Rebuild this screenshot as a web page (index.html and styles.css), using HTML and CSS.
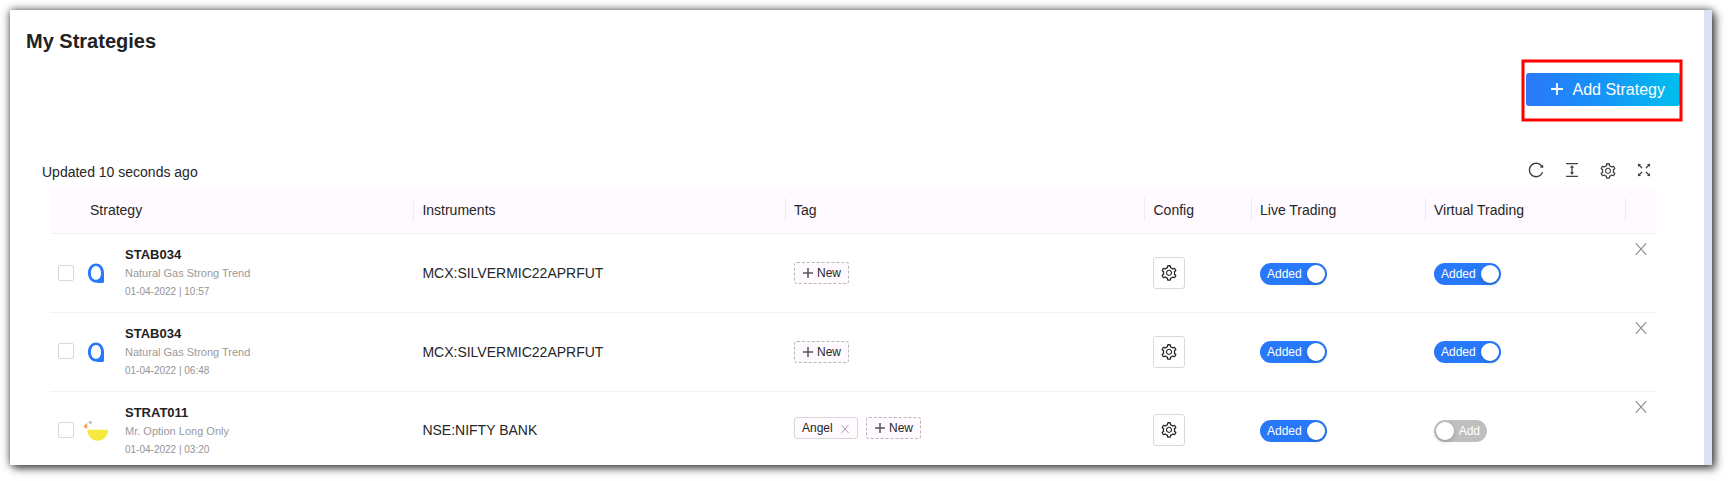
FILE: index.html
```html
<!DOCTYPE html>
<html lang="en">
<head>
<meta charset="utf-8">
<title>My Strategies</title>
<link rel="stylesheet" href="styles.css">
</head>
<body>
<svg class="sprite" aria-hidden="true">
  <symbol id="gear" viewBox="0 0 1024 1024"><path d="M924.8 625.7l-65.5-56c3.1-19 4.7-38.4 4.7-57.8s-1.6-38.8-4.7-57.8l65.5-56a32.03 32.03 0 009.3-35.2l-.9-2.6a443.74 443.74 0 00-79.7-137.9l-1.8-2.1a32.12 32.12 0 00-35.1-9.5l-81.3 28.9c-30-24.6-63.5-44-99.7-57.6l-15.7-85a32.05 32.05 0 00-25.8-25.7l-2.7-.5c-52.1-9.4-106.9-9.4-159 0l-2.7.5a32.05 32.05 0 00-25.8 25.7l-15.8 85.4a351.86 351.86 0 00-99 57.4l-81.9-29.1a32 32 0 00-35.1 9.5l-1.8 2.1a446.02 446.02 0 00-79.7 137.9l-.9 2.6c-4.5 12.5-.8 26.5 9.3 35.2l66.3 56.6c-3.1 18.8-4.6 38-4.6 57.1 0 19.2 1.5 38.4 4.6 57.1L99 625.5a32.03 32.03 0 00-9.3 35.2l.9 2.6c18.1 50.4 44.9 96.9 79.7 137.9l1.8 2.1a32.12 32.12 0 0035.1 9.5l81.9-29.1c29.8 24.5 63.1 43.9 99 57.4l15.8 85.4a32.05 32.05 0 0025.8 25.7l2.7.5a449.4 449.4 0 00159 0l2.7-.5a32.05 32.05 0 0025.8-25.7l15.7-85a350 350 0 0099.7-57.6l81.3 28.9a32 32 0 0035.1-9.5l1.8-2.1c34.8-41.1 61.6-87.5 79.7-137.9l.9-2.6c4.5-12.3.8-26.3-9.3-35zM788.3 465.9c2.5 15.1 3.8 30.6 3.8 46.1s-1.3 31-3.8 46.1l-6.6 40.1 74.7 63.9a370.03 370.03 0 01-42.6 73.6L721 702.8l-31.4 25.8c-23.9 19.6-50.5 35-79.3 45.8l-38.1 14.3-17.9 97a377.5 377.5 0 01-85 0l-17.9-97.2-37.8-14.5c-28.5-10.8-55-26.2-78.7-45.7l-31.4-25.9-93.4 33.2c-17-22.9-31.2-47.6-42.6-73.6l75.5-64.5-6.5-40c-2.4-14.9-3.7-30.3-3.7-45.5 0-15.3 1.2-30.6 3.7-45.5l6.5-40-75.5-64.5c11.3-26.1 25.6-50.7 42.6-73.6l93.4 33.2 31.4-25.9c23.7-19.5 50.2-34.9 78.7-45.7l37.9-14.3 17.9-97.2c28.1-3.2 56.8-3.2 85 0l17.9 97 38.1 14.3c28.7 10.8 55.4 26.2 79.3 45.8l31.4 25.8 92.8-32.9c17 22.9 31.2 47.6 42.6 73.6L781.8 426l6.5 39.9zM512 326c-97.2 0-176 78.8-176 176s78.8 176 176 176 176-78.8 176-176-78.8-176-176-176zm79.2 255.2A111.6 111.6 0 01512 614c-29.9 0-58-11.7-79.2-32.8A111.6 111.6 0 01400 502c0-29.9 11.7-58 32.8-79.2C454 401.6 482.1 390 512 390c29.9 0 58 11.6 79.2 32.8A111.6 111.6 0 01624 502c0 29.9-11.7 58-32.8 79.2z"/></symbol>
  <symbol id="reload" viewBox="0 0 1024 1024"><path d="M909.1 209.3l-56.4 44.1C775.8 155.1 656.2 92 521.9 92 290 92 102.3 279.5 102 511.5 101.7 743.7 289.8 932 521.9 932c181.3 0 335.8-115 394.6-276.1 1.5-4.2-.7-8.9-4.9-10.3l-56.7-19.5a8 8 0 00-10.1 4.8c-1.8 5-3.8 10-5.9 14.9-17.3 41-42.1 77.8-73.7 109.4A344.77 344.77 0 01655.9 829c-42.3 17.9-87.4 27-133.8 27-46.5 0-91.5-9.1-133.8-27A341.5 341.5 0 01279 755.2a342.16 342.16 0 01-73.7-109.4c-17.9-42.4-27-87.4-27-133.9s9.1-91.5 27-133.9c17.3-41 42.1-77.8 73.7-109.4 31.6-31.6 68.4-56.4 109.3-73.8 42.3-17.9 87.4-27 133.8-27 46.5 0 91.5 9.1 133.8 27a341.5 341.5 0 01109.3 73.8c9.9 9.9 19.2 20.4 27.8 31.4l-60.2 47a8 8 0 003 14.1l175.6 43c5 1.2 9.900-2.600 9.900-7.700l.8-180.900c-.1-6.600-7.800-10.300-13-6.200z"/></symbol>
  <symbol id="height" viewBox="0 0 1024 1024"><path d="M840 836H184c-4.400 0-8 3.600-8 8v60c0 4.400 3.600 8 8 8h656c4.400 0 8-3.600 8-8v-60c0-4.400-3.600-8-8-8zm0-724H184c-4.400 0-8 3.600-8 8v60c0 4.400 3.600 8 8 8h656c4.400 0 8-3.600 8-8v-60c0-4.400-3.600-8-8-8zM610.800 378c6 0 9.400-7 5.700-11.700L515.700 238.700a7.140 7.140 0 00-11.300 0L403.600 366.300a7.230 7.230 0 005.700 11.700H476v268h-62.800c-6 0-9.400 7-5.700 11.700l100.800 127.500c2.900 3.700 8.500 3.700 11.300 0l100.800-127.500c3.700-4.700.4-11.700-5.700-11.700H548V378h62.800z"/></symbol>
  <symbol id="full" viewBox="0 0 1024 1024">
    <g id="corner"><path d="M290 236.400l43.900-43.900a8.010 8.010 0 00-4.700-13.600L169 160c-5.100-.6-9.500 3.700-8.900 8.900L179 329.100c.8 6.600 8.900 9.400 13.600 4.700l43.700-43.700L370 423.700c3.100 3.100 8.200 3.100 11.300 0l42.400-42.300c3.100-3.100 3.100-8.200 0-11.300L290 236.400z"/></g>
    <use href="#corner" transform="rotate(90 512 512)"/><use href="#corner" transform="rotate(180 512 512)"/><use href="#corner" transform="rotate(270 512 512)"/>
  </symbol>
  <symbol id="cross" viewBox="0 0 12 12"><path d="M.8.2L11.200 11.800M11.200.2L.8 11.800" fill="none" stroke="currentColor" stroke-width="1.200"/></symbol>
  <symbol id="plus" viewBox="0 0 12 12"><path d="M6 0V12M0 6H12" fill="none" stroke="currentColor" stroke-width="1.800"/></symbol>
  <symbol id="quill" viewBox="0 0 24 24"><path fill-rule="evenodd" d="M12 1.500C7.400 1.500 4 5.500 4 11s3.200 8.900 7.200 9.500c2 .4 4.300.5 6.800.5 1.500 0 2-.5 2-2V11c0-5.500-3.500-9.500-8-9.500zM12 4c3 0 5 3 5 6.900s-2 6.900-5 6.900-5.100-3-5.100-6.900 2.100-6.900 5.100-6.900z"/></symbol>
  <symbol id="duck" viewBox="0 0 26 22"><path fill="#f5ea3d" d="M4.300 9.800h20.800c0 6-4.300 11-10.400 11S4.300 15.800 4.300 9.800z"/><path fill="#f79a54" d="M4.200 3v5.500C2.300 8.300 1 7.300.8 5.900 2.100 5.700 2.500 3.800 4.200 3z"/><circle cx="7.300" cy="2.300" r="1.600" fill="#bdbdc2"/></symbol>
</svg>
<main class="panel">
  <h1 class="title">My Strategies</h1>
  <div class="actions">
    <button class="add"><svg class="add-icon"><use href="#plus"/></svg>Add Strategy</button>
    <svg class="highlight" width="164" height="66"><rect x="3" y="3" width="158" height="59"/></svg>
  </div>
  <div class="toolbar">
    <span>Updated 10 seconds ago</span>
    <div class="tools">
      <svg class="icon"><use href="#reload"/></svg>
      <svg class="icon"><use href="#height"/></svg>
      <svg class="icon tool-gear"><use href="#gear"/></svg>
      <svg class="icon"><use href="#full"/></svg>
    </div>
  </div>
  <section class="table">
    <div class="row head">
      <div class="first">Strategy</div><div>Instruments</div><div>Tag</div><div>Config</div><div>Live Trading</div><div>Virtual Trading</div><div></div>
    </div>
    <div class="row">
      <div class="strategy"><span class="check"></span><svg class="logo quill"><use href="#quill"/></svg>
        <div class="info"><b>STAB034</b><span>Natural Gas Strong Trend</span><small>01-04-2022 | 10:57</small></div></div>
      <div>MCX:SILVERMIC22APRFUT</div>
      <div class="tags"><span class="tag new"><svg><use href="#plus"/></svg>New</span></div>
      <div><span class="config"><svg class="icon"><use href="#gear"/></svg></span></div>
      <div><span class="switch on">Added<i></i></span></div>
      <div><span class="switch on">Added<i></i></span></div>
      <div class="remove"><svg><use href="#cross"/></svg></div>
    </div>
    <div class="row">
      <div class="strategy"><span class="check"></span><svg class="logo quill"><use href="#quill"/></svg>
        <div class="info"><b>STAB034</b><span>Natural Gas Strong Trend</span><small>01-04-2022 | 06:48</small></div></div>
      <div>MCX:SILVERMIC22APRFUT</div>
      <div class="tags"><span class="tag new"><svg><use href="#plus"/></svg>New</span></div>
      <div><span class="config"><svg class="icon"><use href="#gear"/></svg></span></div>
      <div><span class="switch on">Added<i></i></span></div>
      <div><span class="switch on">Added<i></i></span></div>
      <div class="remove"><svg><use href="#cross"/></svg></div>
    </div>
    <div class="row">
      <div class="strategy"><span class="check"></span><svg class="logo duck"><use href="#duck"/></svg>
        <div class="info"><b>STRAT011</b><span>Mr. Option Long Only</span><small>01-04-2022 | 03:20</small></div></div>
      <div>NSE:NIFTY BANK</div>
      <div class="tags multi"><span class="tag angel">Angel<svg class="tag-x"><use href="#cross"/></svg></span><span class="tag new"><svg><use href="#plus"/></svg>New</span></div>
      <div><span class="config"><svg class="icon"><use href="#gear"/></svg></span></div>
      <div><span class="switch on">Added<i></i></span></div>
      <div><span class="switch off"><i></i>Add</span></div>
      <div class="remove"><svg><use href="#cross"/></svg></div>
    </div>
  </section>
</main>
</body>
</html>
```

FILE: styles.css
```css
* { box-sizing: border-box; }
body {
  margin: 0;
  padding: 10px 16px 16px 10px;
  height: 481px;
  overflow: hidden;
  background: #fff;
  color: #262626;
  font: 14px/22px "Liberation Sans", Arial, sans-serif;
}
svg { display: block; flex: none; fill: currentColor; }
.sprite { position: absolute; width: 0; height: 0; }
.panel {
  height: 455px;
  overflow: hidden;
  background: #fff;
  border-right: 8px solid #dce1f6;
  box-shadow: 4px 4px 8px rgba(0, 0, 0, .5), 0 0 8px rgba(0, 0, 0, .68);
}
.title { margin: 0; padding: 16px 16px 0; font-size: 20px; line-height: 30px; height: 63px; font-weight: 700; color: #222; }
.actions { position: relative; display: flex; justify-content: flex-end; padding-right: 24px; height: 78px; }
.add {
  display: flex; align-items: center;
  width: 154px; height: 33px; padding: 0 0 0 25px;
  border: 0; border-radius: 3px;
  background: linear-gradient(90deg, #2a78fa, #1890f8 45%, #00bfee);
  color: #fff; font: 16px/30px "Liberation Sans", Arial, sans-serif;
}
.add-icon { width: 12px; height: 12px; margin: 0 9.500px 1px 0; }
.highlight { position: absolute; right: 20px; top: -15px; }
.highlight rect { fill: none; stroke: #f00; stroke-width: 3; }
.toolbar { display: flex; justify-content: space-between; height: 36px; padding: 10px 51px 0 32px; }
.tools { display: flex; gap: 18px; }
.icon { width: 18px; height: 18px; }
.tools .icon { color: #404040; }
.tools .tool-gear { margin-top: 1px; }
.table { margin: 0 48px 0 40px; width: 1606px; }
.row {
  display: grid;
  grid-template-columns: 364.400px 371.600px 359.500px 106.500px 174px 200px 30px;
  align-items: center;
  height: 78.600px;
  border-bottom: 1px solid #f3f1f3;
}
.row > div { padding-left: 8px; min-width: 0; }
.head { height: 47.400px; background: #fefaff; border-bottom-color: #f4eff4; }
.head > div { height: 22px; line-height: 24px; padding-left: 8px; margin-bottom: 2px; position: relative; }
.head > .first { padding-left: 40px; }
.head > div:not(:last-child)::after { content: ""; position: absolute; right: 0; top: 0; width: 1px; height: 23px; background: #eeeaee; }
.strategy { display: flex; align-items: center; }
.check { width: 16px; height: 16px; border: 1px solid #d9d9d9; border-radius: 2px; margin-bottom: 1px; background: #fff; }
.logo { margin-left: 10px; }
.quill { width: 24px; height: 24px; margin-top: 2px; color: #2878fa; }
.duck { width: 26px; height: 22px; margin: 1px 0 0 9px; }
.info { display: flex; flex-direction: column; width: 200px; margin: 1px 0 0 17px; line-height: 18px; }
.duck + .info { margin: 1.800px 0 0 16px; }
.info b { font-size: 13px; color: #222; }
.info span { font-size: 11px; color: #999; }
.info small { font-size: 10px; line-height: 19px; color: #949494; }
.tags { display: flex; gap: 8px; }
.multi { margin-bottom: 5px; }
.tag { display: flex; align-items: center; height: 22px; padding: 0 7px; font-size: 12px; line-height: 20px; border: 1px solid #d9d5d9; border-radius: 3px; background: #fefaff; }
.angel { width: 64px; }
.new { width: 55px; padding-left: 8px; border: 1px dashed #b9b5b9; }
.new svg { width: 10px; height: 10px; margin-right: 4px; color: #555; }
.tag svg.tag-x { width: 8px; height: 8px; margin: 2px 0 0 8px; color: #8c8c8c; }
.config { display: flex; align-items: center; justify-content: center; width: 32px; height: 32px; border: 1px solid #d9d9d9; border-radius: 3px; }
.switch { display: flex; align-items: center; width: 67px; height: 22px; margin-top: 1px; padding: 0 2px 0 7px; justify-content: space-between; border-radius: 11px; background: #2878fa; color: #fff; font-size: 12px; }
.switch i { width: 18px; height: 18px; border-radius: 50%; background: #fff; box-shadow: 0 2px 4px rgba(0, 35, 11, .2); }
.off { width: 53px; padding: 0 7px 0 2px; background: #bfbfbf; }
.remove { align-self: start; padding: 9px 0 0 9px !important; color: #8c8c8c; }
.remove svg { width: 12px; height: 12px; }
```
